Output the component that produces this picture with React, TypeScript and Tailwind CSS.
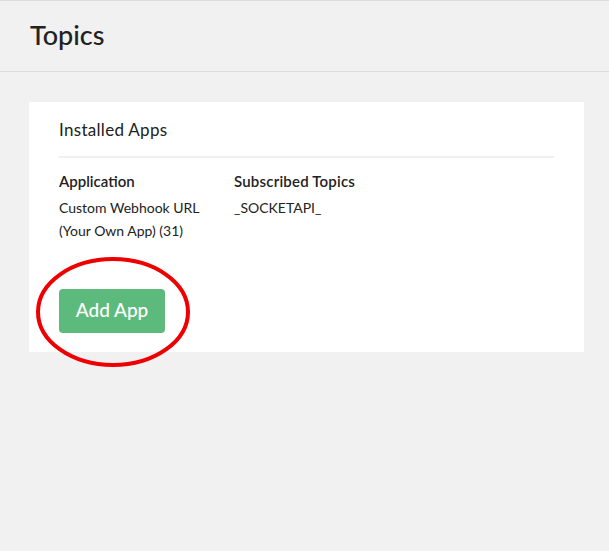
import React from "react";

export default function App() {
  return (
    <div
      className="relative w-[609px] h-[551px] bg-[#f1f1f1] text-[#222] overflow-hidden"
      style={{ fontFamily: "Lato, 'Open Sans', sans-serif" }}
    >
      <div className="border-t border-[#dcdcdc] h-[72px] border-b flex items-center px-[30px]">
        <h1 className="text-[27px] font-medium text-[#222] tracking-[0px] -mt-[2px]">Topics</h1>
      </div>
      <div className="mx-[29px] mt-[30px] w-[555px] bg-white px-[30px] pt-[15px] pb-[19px]">
        <div className="text-[17px] text-[#222] tracking-[0.3px] pb-[13px] border-b-2 border-[#f0f0f0]">Installed Apps</div>
        <div className="flex mt-[12px]">
          <div className="w-[175px]">
            <div className="text-[15px] font-semibold text-[#222] leading-[22px]">Application</div>
            <div className="text-[14px] leading-[23px] mt-[4px] text-[#222]">
              Custom Webhook URL
              <br />
              (Your Own App) (31)
            </div>
          </div>
          <div>
            <div className="text-[15px] font-semibold text-[#222] leading-[22px] tracking-[0.2px]">Subscribed Topics</div>
            <div className="text-[14px] leading-[23px] mt-[4px] text-[#222]">_SOCKETAPI_</div>
          </div>
        </div>
        <button className="mt-[47px] w-[106px] h-[44px] rounded-[4px] bg-[#5dba7d] text-white text-[19px] font-medium">
          Add App
        </button>
      </div>
      <svg className="absolute left-0 top-0" width="609" height="551">
        <ellipse cx="113" cy="312" rx="75" ry="53" fill="none" stroke="#ee0000" strokeWidth="4" />
      </svg>
    </div>
  );
}
